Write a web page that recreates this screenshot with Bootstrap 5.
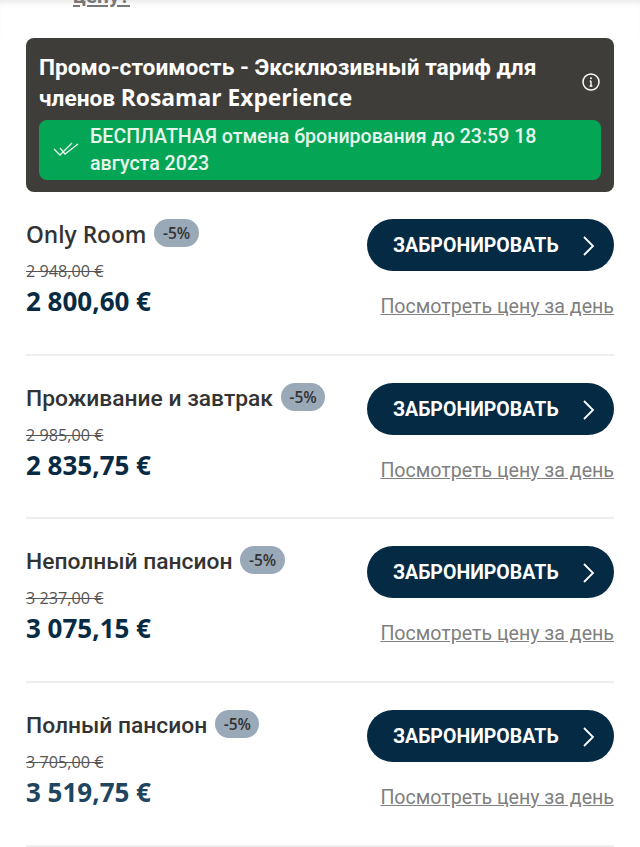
<!DOCTYPE html>
<html lang="ru">
<head>
    <meta charset="UTF-8">
    <meta name="viewport" content="width=device-width, initial-scale=1">
    <title>Тарифы</title>
    <link href="https://cdn.jsdelivr.net/npm/bootstrap@5.3.0/dist/css/bootstrap.min.css" rel="stylesheet">
    <style>
        body { height: 847px; overflow: hidden; background: #fff; font-family: Roboto, sans-serif; color: #333; }
        .top-cut { height: 38px; overflow: hidden; box-shadow: inset 0 6px 6px -4px rgba(0,0,0,.1); }
        .top-cut a { display: block; margin: -16px 0 0 73px; font: 700 21px/24px Roboto, sans-serif; color: #777; }
        .promo-box { margin: 0 26px; height: 154px; background: #3f3d3a; border-radius: 8px; padding: 15px 13px 13px; color: #fff; }
        .promo-title { font-size: 22.7px; font-weight: 700; line-height: 30px; height: 67px; }
        .latin-title { font-family: "Open Sans", sans-serif; font-size: 22.8px; font-weight: 700; }
        .info-ico { width: 18px; height: 18px; margin-right: 1px; margin-top: 20px; }
        .free-box { height: 60px; background: #04a555; border-radius: 8px; color: #e6f6ec; font: 500 19.6px/26.5px Roboto, sans-serif; padding: 4px 40px 0 14px; }
        .check-ico { width: 26px; height: 20px; margin-right: 11px; margin-top: 16px; }
        .rate-row { margin: 0 26px; height: 163.67px; padding-top: 27px; border-bottom: 2px solid #eee; }
        .rate-name { font-size: 22.8px; font-weight: 500; line-height: 30px; margin-top: 1px; color: #333; }
        .latin-name { font-family: "Open Sans", sans-serif; font-size: 22.7px; font-weight: 600; }
        .rate-off { background: #9aa9b8; color: #333; border-radius: 14px; font-family: "Open Sans", sans-serif; font-size: 15.5px; font-weight: 600; line-height: 28px; padding: 0 8.5px; margin-left: 8px; }
        .old-price { font-family: "Open Sans", sans-serif; font-size: 16.2px; line-height: 22px; color: #555; text-decoration: line-through; margin-top: 10px; }
        .new-price { font-family: "Open Sans", sans-serif; font-size: 26px; font-weight: 700; line-height: 38px; color: #082a42; }
        .rate-row:last-child .new-price { color: #1f455f; }
        .book-btn { width: 247px; height: 52px; border-radius: 26px; background: #052a44; color: #fff; border: 0; font: 700 19.5px/52px Roboto, sans-serif; padding: 2px 18px 0 26px; margin-left: auto; }
        .day-link { display: block; margin-top: 24px; font: 400 19.6px/24px Roboto, sans-serif; color: #808080; text-align: right; white-space: nowrap; }
    </style>
</head>
<body>
    <div class="top-cut"><a href="#">цену?</a></div>

    <div class="promo-box">
        <div class="promo-title d-flex justify-content-between align-items-start">
            <span>Промо-стоимость - Эксклюзивный тариф для<br>членов <span class="latin-title">Rosamar Experience</span></span>
            <svg class="info-ico flex-shrink-0" viewBox="0 0 18 18" fill="none" stroke="#fff"><circle cx="9" cy="9" r="8" stroke-width="1.5"/><path d="M9 8v5M7.6 13h2.8M7.8 8H9" stroke-width="1.4"/><circle cx="9" cy="5.3" r="1" fill="#fff" stroke="none"/></svg>
        </div>
        <div class="free-box d-flex">
            <svg class="check-ico flex-shrink-0" viewBox="0 0 26 20" fill="none" stroke="#e6f6ec" stroke-width="1.3"><path d="M1 9l6 6L19 3M7 8l5 6L25 4"/></svg>
            <span>БЕСПЛАТНАЯ отмена бронирования до 23:59 18 августа 2023</span>
        </div>
    </div>

    <div id="rates"></div>

    <script src="https://cdn.jsdelivr.net/npm/bootstrap@5.3.0/dist/js/bootstrap.bundle.min.js"></script>
    <script>
        const rates = [
            { name: 'Only Room', latin: true, old: '2 948,00 €', price: '2 800,60 €' },
            { name: 'Проживание и завтрак', old: '2 985,00 €', price: '2 835,75 €' },
            { name: 'Неполный пансион', old: '3 237,00 €', price: '3 075,15 €' },
            { name: 'Полный пансион', old: '3 705,00 €', price: '3 519,75 €' }
        ];
        document.getElementById('rates').innerHTML = rates.map(r => `
            <div class="rate-row d-flex justify-content-between">
                <div>
                    <div class="d-flex align-items-start"><span class="rate-name ${r.latin ? 'latin-name' : ''}">${r.name}</span><span class="rate-off">-5%</span></div>
                    <div class="old-price">${r.old}</div>
                    <div class="new-price">${r.price}</div>
                </div>
                <div>
                    <button class="book-btn d-flex justify-content-between align-items-center" type="button">
                        <span>ЗАБРОНИРОВАТЬ</span>
                        <svg width="14" height="22" viewBox="0 0 14 22" fill="none" stroke="#fff" stroke-width="1.8"><path d="M2 2l9 9-9 9"/></svg>
                    </button>
                    <a class="day-link" href="#">Посмотреть цену за день</a>
                </div>
            </div>`).join('');
    </script>
</body>
</html>
